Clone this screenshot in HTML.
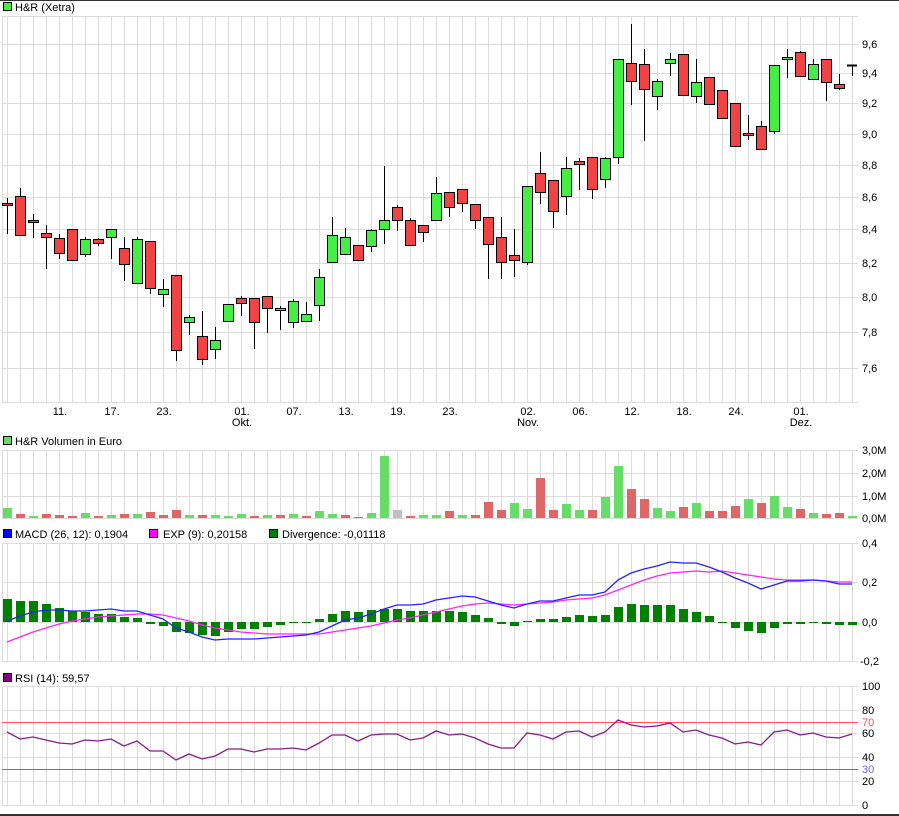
<!DOCTYPE html>
<html><head><meta charset="utf-8"><style>
html,body{margin:0;padding:0;background:#fff}
svg{display:block}
text{font-family:"Liberation Sans",sans-serif;font-size:11px;fill:#000}
</style></head><body>
<svg width="899" height="816" viewBox="0 0 899 816" xmlns="http://www.w3.org/2000/svg">
<defs>
<pattern id="v" x="7" y="0" width="13" height="10" patternUnits="userSpaceOnUse"><rect x="0" y="0" width="1" height="10" fill="#dcdcdc"/></pattern>
</defs>
<rect x="0" y="0" width="899" height="1" fill="#333"/>
<rect x="0" y="814" width="899" height="2" fill="#333"/>

<!-- legends -->
<rect x="3.5" y="2.5" width="8" height="8" fill="#44ee44" stroke="#000"/>
<text x="15" y="11">H&amp;R (Xetra)</text>
<rect x="3.5" y="436.5" width="8" height="8" fill="#66dd66" stroke="#000"/>
<text x="15" y="445">H&amp;R Volumen in Euro</text>
<rect x="3.5" y="529.5" width="8" height="8" fill="#0000ff" stroke="#000"/>
<text x="15" y="538">MACD (26, 12): 0,1904</text>
<rect x="149.5" y="529.5" width="8" height="8" fill="#ff00ff" stroke="#000"/>
<text x="163" y="538">EXP (9): 0,20158</text>
<rect x="269.5" y="529.5" width="8" height="8" fill="#008000" stroke="#000"/>
<text x="282" y="538">Divergence: -0,01118</text>
<rect x="3.5" y="673.5" width="8" height="8" fill="#800080" stroke="#000"/>
<text x="15" y="682">RSI (14): 59,57</text>

<!-- grids -->
<g shape-rendering="crispEdges" fill="#dcdcdc">
<rect x="7" y="16" width="846" height="387" fill="url(#v)"/>
<rect x="2" y="16" width="1" height="387"/>
<rect x="2" y="16" width="856" height="1"/><rect x="2" y="44" width="856" height="1"/><rect x="2" y="73" width="856" height="1"/><rect x="2" y="103" width="856" height="1"/><rect x="2" y="134" width="856" height="1"/><rect x="2" y="165" width="856" height="1"/><rect x="2" y="197" width="856" height="1"/><rect x="2" y="229" width="856" height="1"/><rect x="2" y="263" width="856" height="1"/><rect x="2" y="297" width="856" height="1"/><rect x="2" y="332" width="856" height="1"/><rect x="2" y="368" width="856" height="1"/><rect x="2" y="402" width="856" height="1"/>

<rect x="7" y="450" width="846" height="69" fill="url(#v)"/>
<rect x="2" y="450" width="1" height="69"/>
<rect x="2" y="450" width="856" height="1"/><rect x="2" y="473" width="856" height="1"/><rect x="2" y="496" width="856" height="1"/><rect x="2" y="518" width="856" height="1"/>

<rect x="7" y="543" width="846" height="119" fill="url(#v)"/>
<rect x="2" y="543" width="1" height="119"/>
<rect x="2" y="543" width="856" height="1"/><rect x="2" y="582" width="856" height="1"/><rect x="2" y="622" width="856" height="1"/><rect x="2" y="661" width="856" height="1"/>

<rect x="7" y="686" width="846" height="120" fill="url(#v)"/>
<rect x="2" y="686" width="1" height="120"/>
<rect x="2" y="686" width="856" height="1"/><rect x="2" y="710" width="856" height="1"/><rect x="2" y="733" width="856" height="1"/><rect x="2" y="757" width="856" height="1"/><rect x="2" y="781" width="856" height="1"/><rect x="2" y="805" width="856" height="1"/>
<rect x="2" y="722" width="856" height="1" fill="#ff5555"/>
<rect x="2" y="769" width="856" height="1" fill="#6666ee"/>
</g>

<!-- axis labels -->
<g>
<text x="862" y="48">9,6</text><text x="862" y="77">9,4</text><text x="862" y="107">9,2</text><text x="862" y="138">9,0</text><text x="862" y="169">8,8</text><text x="862" y="201">8,6</text><text x="862" y="233">8,4</text><text x="862" y="267">8,2</text><text x="862" y="301">8,0</text><text x="862" y="336">7,8</text><text x="862" y="372">7,6</text>
<text x="862" y="454">3,0M</text><text x="862" y="477">2,0M</text><text x="862" y="500">1,0M</text><text x="862" y="522">0,0M</text>
<text x="862" y="547">0,4</text><text x="862" y="586">0,2</text><text x="862" y="626">0,0</text><text x="860" y="665">-0,2</text>
<text x="862" y="690">100</text><text x="862" y="714">80</text><text x="862" y="726" style="fill:#ff5555">70</text><text x="862" y="737">60</text><text x="862" y="761">40</text><text x="862" y="773" style="fill:#6666ee">30</text><text x="862" y="785">20</text><text x="862" y="809">0</text>
</g>
<g text-anchor="middle">
<text x="60" y="415">11.</text><text x="112" y="415">17.</text><text x="164" y="415">23.</text><text x="242" y="415">01.</text><text x="242" y="426">Okt.</text><text x="294" y="415">07.</text><text x="346" y="415">13.</text><text x="398" y="415">19.</text><text x="450" y="415">23.</text><text x="528" y="415">02.</text><text x="528" y="426">Nov.</text><text x="580" y="415">06.</text><text x="632" y="415">12.</text><text x="684" y="415">18.</text><text x="736" y="415">24.</text><text x="801" y="415">01.</text><text x="801" y="426">Dez.</text>
</g>

<!-- candles -->
<g stroke="#000" stroke-width="1" shape-rendering="crispEdges">
<line x1="7.5" y1="198" x2="7.5" y2="234"/><rect x="2.5" y="203.5" width="10" height="2" fill="#f04444"/>
<line x1="20.5" y1="188" x2="20.5" y2="235"/><rect x="15.5" y="196.5" width="10" height="39" fill="#f04444"/>
<line x1="33.5" y1="214" x2="33.5" y2="238"/><rect x="28.5" y="220.5" width="10" height="2" fill="#f04444"/>
<line x1="46.5" y1="225" x2="46.5" y2="269"/><rect x="41.5" y="233.5" width="10" height="4" fill="#f04444"/>
<line x1="59.5" y1="234" x2="59.5" y2="259"/><rect x="54.5" y="238.5" width="10" height="15" fill="#f04444"/>
<line x1="72.5" y1="229" x2="72.5" y2="260"/><rect x="67.5" y="229.5" width="10" height="31" fill="#f04444"/>
<line x1="85.5" y1="237" x2="85.5" y2="257"/><rect x="80.5" y="239.5" width="10" height="15" fill="#44ee44"/>
<line x1="98.5" y1="238" x2="98.5" y2="246"/><rect x="93.5" y="239.5" width="10" height="4" fill="#f04444"/>
<line x1="111.5" y1="229" x2="111.5" y2="259"/><rect x="106.5" y="229.5" width="10" height="8" fill="#44ee44"/>
<line x1="124.5" y1="237" x2="124.5" y2="281"/><rect x="119.5" y="248.5" width="10" height="16" fill="#f04444"/>
<line x1="137.5" y1="237" x2="137.5" y2="283"/><rect x="132.5" y="239.5" width="10" height="44" fill="#44ee44"/>
<line x1="150.5" y1="241" x2="150.5" y2="294"/><rect x="145.5" y="241.5" width="10" height="47" fill="#f04444"/>
<line x1="163.5" y1="279" x2="163.5" y2="307"/><rect x="158.5" y="289.5" width="10" height="5" fill="#44ee44"/>
<line x1="176.5" y1="275" x2="176.5" y2="361"/><rect x="171.5" y="275.5" width="10" height="75" fill="#f04444"/>
<line x1="189.5" y1="315" x2="189.5" y2="335"/><rect x="184.5" y="317.5" width="10" height="5" fill="#44ee44"/>
<line x1="202.5" y1="311" x2="202.5" y2="365"/><rect x="197.5" y="336.5" width="10" height="23" fill="#f04444"/>
<line x1="215.5" y1="327" x2="215.5" y2="359"/><rect x="210.5" y="340.5" width="10" height="9" fill="#44ee44"/>
<line x1="228.5" y1="304" x2="228.5" y2="321"/><rect x="223.5" y="304.5" width="10" height="17" fill="#44ee44"/>
<line x1="241.5" y1="296" x2="241.5" y2="316"/><rect x="236.5" y="298.5" width="10" height="5" fill="#f04444"/>
<line x1="254.5" y1="298" x2="254.5" y2="349"/><rect x="249.5" y="298.5" width="10" height="24" fill="#f04444"/>
<line x1="267.5" y1="296" x2="267.5" y2="333"/><rect x="262.5" y="296.5" width="10" height="12" fill="#f04444"/>
<line x1="280.5" y1="306" x2="280.5" y2="330"/><rect x="275.5" y="308.5" width="10" height="2" fill="#44ee44"/>
<line x1="293.5" y1="299" x2="293.5" y2="328"/><rect x="288.5" y="301.5" width="10" height="21" fill="#44ee44"/>
<line x1="306.5" y1="302" x2="306.5" y2="322"/><rect x="301.5" y="314.5" width="10" height="7" fill="#44ee44"/>
<line x1="319.5" y1="269" x2="319.5" y2="321"/><rect x="314.5" y="277.5" width="10" height="28" fill="#44ee44"/>
<line x1="332.5" y1="217" x2="332.5" y2="262"/><rect x="327.5" y="235.5" width="10" height="27" fill="#44ee44"/>
<line x1="345.5" y1="228" x2="345.5" y2="254"/><rect x="340.5" y="237.5" width="10" height="17" fill="#44ee44"/>
<line x1="358.5" y1="245" x2="358.5" y2="260"/><rect x="353.5" y="245.5" width="10" height="15" fill="#f04444"/>
<line x1="371.5" y1="229" x2="371.5" y2="252"/><rect x="366.5" y="230.5" width="10" height="16" fill="#44ee44"/>
<line x1="384.5" y1="166" x2="384.5" y2="244"/><rect x="379.5" y="220.5" width="10" height="9" fill="#44ee44"/>
<line x1="397.5" y1="205" x2="397.5" y2="231"/><rect x="392.5" y="207.5" width="10" height="13" fill="#f04444"/>
<line x1="410.5" y1="218" x2="410.5" y2="245"/><rect x="405.5" y="220.5" width="10" height="25" fill="#f04444"/>
<line x1="423.5" y1="225" x2="423.5" y2="242"/><rect x="418.5" y="225.5" width="10" height="7" fill="#f04444"/>
<line x1="436.5" y1="177" x2="436.5" y2="220"/><rect x="431.5" y="193.5" width="10" height="27" fill="#44ee44"/>
<line x1="449.5" y1="192" x2="449.5" y2="217"/><rect x="444.5" y="192.5" width="10" height="15" fill="#f04444"/>
<line x1="462.5" y1="189" x2="462.5" y2="212"/><rect x="457.5" y="189.5" width="10" height="14" fill="#f04444"/>
<line x1="475.5" y1="204" x2="475.5" y2="229"/><rect x="470.5" y="204.5" width="10" height="16" fill="#f04444"/>
<line x1="488.5" y1="217" x2="488.5" y2="279"/><rect x="483.5" y="217.5" width="10" height="27" fill="#f04444"/>
<line x1="501.5" y1="217" x2="501.5" y2="279"/><rect x="496.5" y="237.5" width="10" height="25" fill="#f04444"/>
<line x1="514.5" y1="229" x2="514.5" y2="277"/><rect x="509.5" y="255.5" width="10" height="5" fill="#f04444"/>
<line x1="527.5" y1="186" x2="527.5" y2="265"/><rect x="522.5" y="186.5" width="10" height="76" fill="#44ee44"/>
<line x1="540.5" y1="152" x2="540.5" y2="204"/><rect x="535.5" y="173.5" width="10" height="19" fill="#f04444"/>
<line x1="553.5" y1="180" x2="553.5" y2="228"/><rect x="548.5" y="180.5" width="10" height="31" fill="#f04444"/>
<line x1="566.5" y1="157" x2="566.5" y2="215"/><rect x="561.5" y="168.5" width="10" height="28" fill="#44ee44"/>
<line x1="579.5" y1="158" x2="579.5" y2="190"/><rect x="574.5" y="161.5" width="10" height="3" fill="#f04444"/>
<line x1="592.5" y1="157" x2="592.5" y2="199"/><rect x="587.5" y="157.5" width="10" height="32" fill="#f04444"/>
<line x1="605.5" y1="157" x2="605.5" y2="188"/><rect x="600.5" y="158.5" width="10" height="21" fill="#44ee44"/>
<line x1="618.5" y1="59" x2="618.5" y2="164"/><rect x="613.5" y="59.5" width="10" height="98" fill="#44ee44"/>
<line x1="631.5" y1="24" x2="631.5" y2="105"/><rect x="626.5" y="63.5" width="10" height="18" fill="#f04444"/>
<line x1="644.5" y1="49" x2="644.5" y2="141"/><rect x="639.5" y="64.5" width="10" height="25" fill="#f04444"/>
<line x1="657.5" y1="79" x2="657.5" y2="110"/><rect x="652.5" y="81.5" width="10" height="15" fill="#44ee44"/>
<line x1="670.5" y1="53" x2="670.5" y2="76"/><rect x="665.5" y="59.5" width="10" height="4" fill="#44ee44"/>
<line x1="683.5" y1="54" x2="683.5" y2="95"/><rect x="678.5" y="54.5" width="10" height="41" fill="#f04444"/>
<line x1="696.5" y1="59" x2="696.5" y2="103"/><rect x="691.5" y="82.5" width="10" height="14" fill="#44ee44"/>
<line x1="709.5" y1="77" x2="709.5" y2="104"/><rect x="704.5" y="77.5" width="10" height="27" fill="#f04444"/>
<line x1="722.5" y1="90" x2="722.5" y2="118"/><rect x="717.5" y="90.5" width="10" height="28" fill="#f04444"/>
<line x1="735.5" y1="103" x2="735.5" y2="147"/><rect x="730.5" y="103.5" width="10" height="43" fill="#f04444"/>
<line x1="748.5" y1="115" x2="748.5" y2="140"/><rect x="743.5" y="133.5" width="10" height="2" fill="#f04444"/>
<line x1="761.5" y1="121" x2="761.5" y2="149"/><rect x="756.5" y="126.5" width="10" height="23" fill="#f04444"/>
<line x1="774.5" y1="65" x2="774.5" y2="134"/><rect x="769.5" y="65.5" width="10" height="66" fill="#44ee44"/>
<line x1="787.5" y1="49" x2="787.5" y2="78"/><rect x="782.5" y="57.5" width="10" height="2" fill="#44ee44"/>
<line x1="800.5" y1="51" x2="800.5" y2="76"/><rect x="795.5" y="52.5" width="10" height="24" fill="#f04444"/>
<line x1="813.5" y1="59" x2="813.5" y2="79"/><rect x="808.5" y="64.5" width="10" height="15" fill="#44ee44"/>
<line x1="826.5" y1="59" x2="826.5" y2="101"/><rect x="821.5" y="59.5" width="10" height="23" fill="#f04444"/>
<line x1="839.5" y1="74" x2="839.5" y2="90"/><rect x="834.5" y="84.5" width="10" height="4" fill="#f04444"/>
<line x1="852.5" y1="65" x2="852.5" y2="76"/><line x1="847" y1="65.5" x2="857" y2="65.5" stroke-width="2"/>
</g>

<!-- volume -->
<g shape-rendering="crispEdges">
<rect x="3" y="508" width="9" height="10" fill="#66dd66"/>
<rect x="16" y="514" width="9" height="4" fill="#dd6666"/>
<rect x="29" y="516" width="9" height="2" fill="#66dd66"/>
<rect x="42" y="514" width="9" height="4" fill="#dd6666"/>
<rect x="55" y="515" width="9" height="3" fill="#dd6666"/>
<rect x="68" y="516" width="9" height="2" fill="#dd6666"/>
<rect x="81" y="513" width="9" height="5" fill="#66dd66"/>
<rect x="94" y="516" width="9" height="2" fill="#dd6666"/>
<rect x="107" y="515" width="9" height="3" fill="#66dd66"/>
<rect x="120" y="514" width="9" height="4" fill="#dd6666"/>
<rect x="133" y="514" width="9" height="4" fill="#66dd66"/>
<rect x="146" y="512" width="9" height="6" fill="#dd6666"/>
<rect x="159" y="515" width="9" height="3" fill="#dd6666"/>
<rect x="172" y="510" width="9" height="8" fill="#dd6666"/>
<rect x="185" y="515" width="9" height="3" fill="#66dd66"/>
<rect x="198" y="515" width="9" height="3" fill="#dd6666"/>
<rect x="211" y="515" width="9" height="3" fill="#66dd66"/>
<rect x="224" y="516" width="9" height="2" fill="#66dd66"/>
<rect x="237" y="514" width="9" height="4" fill="#66dd66"/>
<rect x="250" y="516" width="9" height="2" fill="#dd6666"/>
<rect x="263" y="515" width="9" height="3" fill="#66dd66"/>
<rect x="276" y="515" width="9" height="3" fill="#dd6666"/>
<rect x="289" y="514" width="9" height="4" fill="#66dd66"/>
<rect x="302" y="516" width="9" height="2" fill="#dd6666"/>
<rect x="315" y="511" width="9" height="7" fill="#66dd66"/>
<rect x="328" y="514" width="9" height="4" fill="#66dd66"/>
<rect x="341" y="515" width="9" height="3" fill="#dd6666"/>
<rect x="354" y="517" width="9" height="1" fill="#dd6666"/>
<rect x="367" y="513" width="9" height="5" fill="#66dd66"/>
<rect x="380" y="456" width="9" height="62" fill="#66dd66"/>
<rect x="393" y="510" width="9" height="8" fill="#c0c0c0"/>
<rect x="406" y="516" width="9" height="2" fill="#dd6666"/>
<rect x="419" y="515" width="9" height="3" fill="#66dd66"/>
<rect x="432" y="515" width="9" height="3" fill="#66dd66"/>
<rect x="445" y="511" width="9" height="7" fill="#dd6666"/>
<rect x="458" y="515" width="9" height="3" fill="#66dd66"/>
<rect x="471" y="515" width="9" height="3" fill="#dd6666"/>
<rect x="484" y="502" width="9" height="16" fill="#dd6666"/>
<rect x="497" y="510" width="9" height="8" fill="#dd6666"/>
<rect x="510" y="503" width="9" height="15" fill="#66dd66"/>
<rect x="523" y="509" width="9" height="9" fill="#66dd66"/>
<rect x="536" y="478" width="9" height="40" fill="#dd6666"/>
<rect x="549" y="510" width="9" height="8" fill="#dd6666"/>
<rect x="562" y="504" width="9" height="14" fill="#66dd66"/>
<rect x="575" y="510" width="9" height="8" fill="#66dd66"/>
<rect x="588" y="510" width="9" height="8" fill="#dd6666"/>
<rect x="601" y="497" width="9" height="21" fill="#66dd66"/>
<rect x="614" y="466" width="9" height="52" fill="#66dd66"/>
<rect x="627" y="489" width="9" height="29" fill="#dd6666"/>
<rect x="640" y="499" width="9" height="19" fill="#dd6666"/>
<rect x="653" y="508" width="9" height="10" fill="#66dd66"/>
<rect x="666" y="511" width="9" height="7" fill="#66dd66"/>
<rect x="679" y="507" width="9" height="11" fill="#dd6666"/>
<rect x="692" y="503" width="9" height="15" fill="#66dd66"/>
<rect x="705" y="511" width="9" height="7" fill="#dd6666"/>
<rect x="718" y="511" width="9" height="7" fill="#dd6666"/>
<rect x="731" y="506" width="9" height="12" fill="#dd6666"/>
<rect x="744" y="499" width="9" height="19" fill="#66dd66"/>
<rect x="757" y="503" width="9" height="15" fill="#dd6666"/>
<rect x="770" y="496" width="9" height="22" fill="#66dd66"/>
<rect x="783" y="507" width="9" height="11" fill="#66dd66"/>
<rect x="796" y="509" width="9" height="9" fill="#dd6666"/>
<rect x="809" y="513" width="9" height="5" fill="#66dd66"/>
<rect x="822" y="514" width="9" height="4" fill="#dd6666"/>
<rect x="835" y="513" width="9" height="5" fill="#dd6666"/>
<rect x="848" y="516" width="9" height="2" fill="#66dd66"/>
</g>

<!-- MACD histogram -->
<g fill="#008000" shape-rendering="crispEdges">
<rect x="3" y="599" width="9" height="23"/><rect x="16" y="601" width="9" height="21"/><rect x="29" y="601" width="9" height="21"/><rect x="42" y="604" width="9" height="18"/><rect x="55" y="608" width="9" height="14"/><rect x="68" y="611" width="9" height="11"/><rect x="81" y="612" width="9" height="10"/><rect x="94" y="614" width="9" height="8"/><rect x="107" y="614" width="9" height="8"/><rect x="120" y="617" width="9" height="5"/><rect x="133" y="618" width="9" height="4"/>
<rect x="146" y="622" width="9" height="2"/><rect x="159" y="622" width="9" height="4"/><rect x="172" y="622" width="9" height="10"/><rect x="185" y="622" width="9" height="11"/><rect x="198" y="622" width="9" height="13"/><rect x="211" y="622" width="9" height="14"/><rect x="224" y="622" width="9" height="10"/><rect x="237" y="622" width="9" height="7"/><rect x="250" y="622" width="9" height="7"/><rect x="263" y="622" width="9" height="5"/><rect x="276" y="622" width="9" height="3"/><rect x="289" y="622" width="9" height="1"/><rect x="302" y="622" width="9" height="1"/>
<rect x="315" y="619" width="9" height="3"/><rect x="328" y="614" width="9" height="8"/><rect x="341" y="611" width="9" height="11"/><rect x="354" y="612" width="9" height="10"/><rect x="367" y="610" width="9" height="12"/><rect x="380" y="609" width="9" height="13"/><rect x="393" y="609" width="9" height="13"/><rect x="406" y="611" width="9" height="11"/><rect x="419" y="611" width="9" height="11"/><rect x="432" y="611" width="9" height="11"/><rect x="445" y="611" width="9" height="11"/><rect x="458" y="612" width="9" height="10"/><rect x="471" y="615" width="9" height="7"/><rect x="484" y="618" width="9" height="4"/>
<rect x="497" y="622" width="9" height="2"/><rect x="510" y="622" width="9" height="4"/>
<rect x="523" y="621" width="9" height="1"/><rect x="536" y="619" width="9" height="3"/><rect x="549" y="619" width="9" height="3"/><rect x="562" y="617" width="9" height="5"/><rect x="575" y="615" width="9" height="7"/><rect x="588" y="616" width="9" height="6"/><rect x="601" y="615" width="9" height="7"/><rect x="614" y="607" width="9" height="15"/><rect x="627" y="604" width="9" height="18"/><rect x="640" y="605" width="9" height="17"/><rect x="653" y="605" width="9" height="17"/><rect x="666" y="605" width="9" height="17"/><rect x="679" y="609" width="9" height="13"/><rect x="692" y="612" width="9" height="10"/><rect x="705" y="616" width="9" height="6"/><rect x="718" y="622" width="9" height="1"/>
<rect x="731" y="622" width="9" height="6"/><rect x="744" y="622" width="9" height="9"/><rect x="757" y="622" width="9" height="11"/><rect x="770" y="622" width="9" height="6"/><rect x="783" y="622" width="9" height="2"/><rect x="796" y="622" width="9" height="2"/><rect x="809" y="622" width="9" height="1"/><rect x="822" y="622" width="9" height="2"/><rect x="835" y="622" width="9" height="3"/><rect x="848" y="622" width="9" height="3"/>
</g>

<polyline fill="none" stroke="#ff22ff" stroke-width="1.3" points="7,642 20,637 33,632 46,628 59,624 72,621 85,619 98,617 111,616 124,615 137,614 150,614 163,615 176,618 189,621 202,625 215,628 228,630 241,632 254,633 267,634 280,634 293,634 306,634 319,634 332,632 345,630 358,628 371,626 384,623 397,620 410,618 423,615 436,612 449,609 462,606 475,604 488,603 501,604 514,605 527,604 540,603 553,602 566,600 579,599 592,598 605,595 618,590 631,585 644,580 657,576 670,573 683,572 696,571 709,572 722,571 735,573 748,575 761,577 774,579 787,580 800,580 813,580 826,581 839,582 852,582"/>
<polyline fill="none" stroke="#2222ff" stroke-width="1.3" points="7,621 20,616 33,612 46,610 59,610 72,611 85,611 98,610 111,609 124,611 137,611 150,615 163,619 176,628 189,632 202,637 215,640 228,639 241,639 254,639 267,638 280,637 293,636 306,635 319,632 332,626 345,620 358,618 371,614 384,609 397,605 410,605 423,604 436,600 449,598 462,596 475,597 488,601 501,605 514,608 527,604 540,601 553,601 566,598 579,595 592,595 605,592 618,580 631,573 644,569 657,566 670,562 683,563 696,563 709,567 722,572 735,578 748,583 761,589 774,585 787,581 800,581 813,580 826,581 839,584 852,584"/>

<polyline fill="none" stroke="#8b1a8b" stroke-width="1.3" points="7,732 20,739 33,737 46,740 59,743 72,744 85,740 98,741 111,739 124,746 137,741 150,751 163,751 176,760 189,754 202,759 215,756 228,749 241,749 254,752 267,749 280,749 293,748 306,750 319,743 332,735 345,735 358,741 371,735 384,734 397,734 410,740 423,738 436,731 449,735 462,734 475,738 488,744 501,748 514,748 527,733 540,735 553,739 566,732 579,731 592,737 605,732 618,720 631,725 644,727 657,726 670,723 683,732 696,730 709,735 722,738 735,744 748,742 761,745 774,732 787,730 800,735 813,733 826,737 839,738 852,734"/>
</svg>
</body></html>
